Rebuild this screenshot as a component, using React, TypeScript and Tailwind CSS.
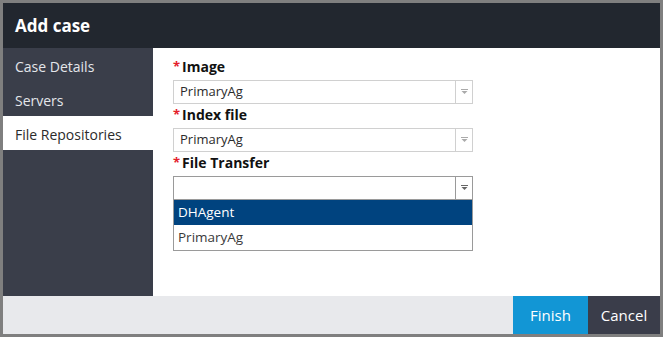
const font = { fontFamily: '"Open Sans", "Noto Sans", sans-serif' };

function Arrow({ dark }: { dark?: boolean }) {
  return (
    <svg width="9" height="6" viewBox="0 0 9 6">
      <rect x="1" y="0" width="7" height="1" fill={dark ? "#666" : "#aaa"} />
      <path d="M1.5 2 L7.5 2 L4.5 5 Z" fill={dark ? "#666" : "#aaa"} />
    </svg>
  );
}

function Select({ value, focused }: { value: string; focused?: boolean }) {
  return (
    <div
      className={`flex h-6 w-[300px] items-stretch border ${
        focused ? "border-[#9a9a9a]" : "border-[#d0d0d0]"
      }`}
    >
      <div className="flex flex-1 items-center pl-[6px] text-[13px] text-[#2b2b2b]">
        {value}
      </div>
      <div
        className={`flex w-[17px] items-center justify-center border-l ${
          focused ? "border-[#9a9a9a]" : "border-[#d0d0d0]"
        }`}
      >
        <Arrow dark={focused} />
      </div>
    </div>
  );
}

function Label({ text }: { text: string }) {
  return (
    <div className="flex h-6 items-center pb-[3px] text-[14px] font-bold text-[#111]">
      <span className="mr-[2px] text-[13px] text-[#e4202a]">*</span>
      {text}
    </div>
  );
}

export default function App() {
  return (
    <div
      style={font}
      className="flex h-[337px] w-[663px] flex-col border-[3px] border-[#7f7f7f] bg-white"
    >
      {/* Header */}
      <div className="flex h-[45px] shrink-0 items-center bg-[#22272f] pl-3 text-[17px] font-bold text-white">
        Add case
      </div>

      <div className="flex flex-1">
        {/* Sidebar */}
        <div className="w-[150px] shrink-0 bg-[#3a3e4a] text-[14px]">
          <div className="flex h-[34px] items-center pl-3 pt-[2px] text-[#e4e6ea]">Case Details</div>
          <div className="flex h-[34px] items-center pl-3 pt-[2px] text-[#e4e6ea]">Servers</div>
          <div className="flex h-[34px] items-center bg-white pl-3 pt-[2px] text-[#2b2b2b]">
            File Repositories
          </div>
        </div>

        {/* Form */}
        <div className="flex-1 pl-5 pt-2">
          <Label text="Image" />
          <Select value="PrimaryAg" />
          <Label text="Index file" />
          <Select value="PrimaryAg" />
          <Label text="File Transfer" />
          <div className="relative w-[300px]">
            <Select value="" focused />
            <div className="absolute left-0 top-6 w-[300px] border border-t-0 border-[#9a9a9a] bg-white text-[13.5px]">
              <div className="flex h-[25px] items-center bg-[#00437f] pl-1 text-white">DHAgent</div>
              <div className="flex h-[25px] items-center pl-1 text-[#3a3a3a]">PrimaryAg</div>
            </div>
          </div>
        </div>
      </div>

      {/* Footer */}
      <div className="flex h-[38px] shrink-0 justify-end bg-[#e8e9ec] text-[15px] text-white">
        <button className="w-[75px] bg-[#1296d5]">Finish</button>
        <button className="w-[72px] bg-[#3a3d4a]">Cancel</button>
      </div>
    </div>
  );
}
